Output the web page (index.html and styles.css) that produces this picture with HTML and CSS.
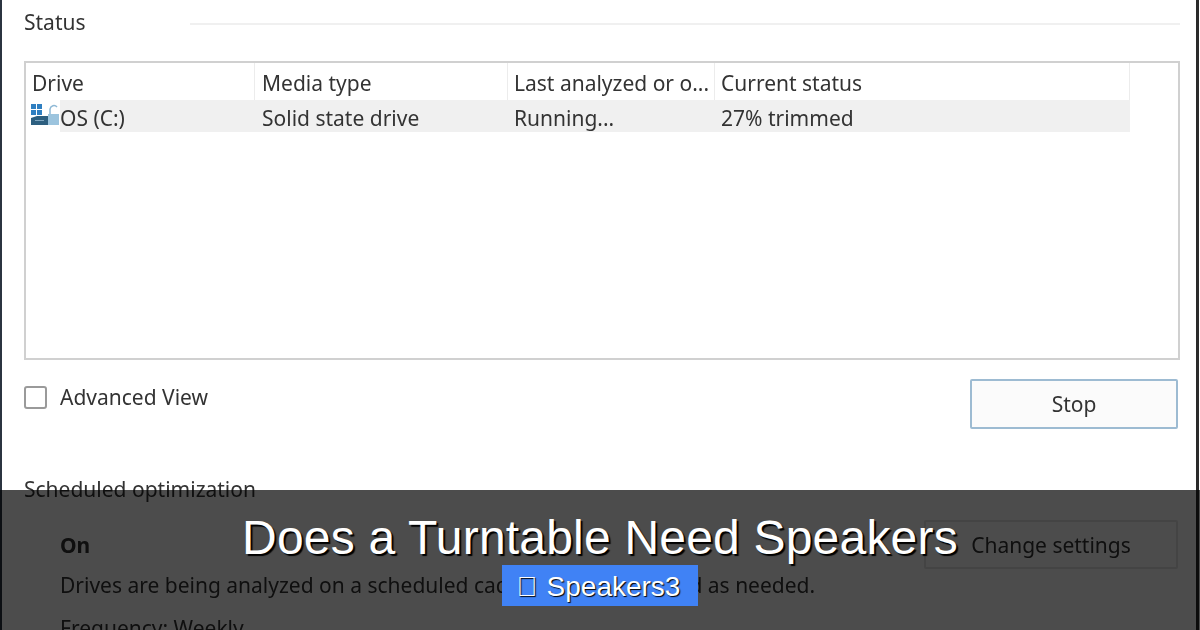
FILE: index.html
```html
<!DOCTYPE html>
<html lang="en">
<head>
    <meta charset="UTF-8">
    <meta name="viewport" content="width=device-width, initial-scale=1.0">
    <title>Does a Turntable Need Speakers</title>
    <link rel="stylesheet" href="styles.css">
</head>
<body>

<div class="window">
    <!-- Status group -->
    <div class="group-title">
        <span>Status</span>
        <div class="group-line"></div>
    </div>

    <div class="drive-list">
        <div class="drive-row drive-head">
            <div class="cell cell-drive">Drive</div>
            <div class="cell cell-media">Media type</div>
            <div class="cell cell-last">Last analyzed or o...</div>
            <div class="cell cell-status">Current status</div>
        </div>
        <div class="drive-row drive-selected">
            <div class="cell cell-drive">
                <svg class="drive-icon" width="30" height="26" viewBox="0 0 30 26">
                    <rect x="1" y="1" width="5" height="5" fill="#2f7fc1"/>
                    <rect x="7" y="1" width="5" height="5" fill="#2f7fc1"/>
                    <rect x="1" y="7" width="5" height="5" fill="#2f7fc1"/>
                    <rect x="7" y="7" width="5" height="5" fill="#2f7fc1"/>
                    <path d="M20 11V6a4 4 0 0 1 7 -2" fill="none" stroke="#8fb9d6" stroke-width="1.500"/>
                    <path d="M1 15 L7 13 H18 V22 H1 Z" fill="#2d5f80"/>
                    <rect x="18" y="11" width="11" height="11" fill="#9cc4de"/>
                    <rect x="5" y="17" width="9" height="1" fill="#7fa6c0"/>
                </svg>
                <span>OS (C:)</span>
            </div>
            <div class="cell cell-media">Solid state drive</div>
            <div class="cell cell-last">Running...</div>
            <div class="cell cell-status">27% trimmed</div>
        </div>
    </div>

    <div class="actions">
        <label class="check">
            <span class="check-box"></span>
            <span>Advanced View</span>
        </label>
        <div class="btn btn-stop">Stop</div>
    </div>

    <!-- Scheduled optimization -->
    <div class="schedule-title">Scheduled optimization</div>
    <div class="schedule">
        <div class="schedule-top">
            <b>On</b>
            <div class="btn btn-change">Change settings</div>
        </div>
        <p>Drives are being analyzed on a scheduled cadence and optimized as needed.</p>
        <p class="frequency">Frequency: Weekly</p>
    </div>
</div>

<!-- Title banner over the screenshot -->
<div class="banner">
    <h1>Does a Turntable Need Speakers</h1>
    <div class="tag"><span>&#xE000;</span><span>Speakers3</span></div>
</div>

</body>
</html>
```

FILE: styles.css
```css
html, body {
    margin: 0;
    padding: 0;
}

body {
    width: 1200px;
    height: 630px;
    overflow: hidden;
    position: relative;
    background: #fff;
    font-family: "Noto Sans", "Open Sans", sans-serif;
    color: #333;
}

.window {
    box-sizing: border-box;
    height: 630px;
    padding: 0 16px 0 22px;
    border-left: 2px solid #2b3440;
    border-right: 3px solid #2a2a2a;
    margin-right: 1px;
    font-size: 21px;
    filter: blur(0.6px);
}

.group-title {
    display: flex;
    align-items: center;
    height: 44px;
}

.group-line {
    flex: 1;
    height: 2px;
    margin-left: 104px;
    margin-top: 3px;
    background: #f0f0f0;
}

.drive-list {
    box-sizing: border-box;
    height: 299px;
    margin-top: 17px;
    padding-right: 48px;
    border: 2px solid #d0d0d0;
}

.drive-row {
    display: flex;
    align-items: center;
}

.drive-head {
    height: 37px;
}

.drive-selected {
    height: 32px;
    background: linear-gradient(to right, #fff 34px, #f0f0f0 34px);
}

.cell {
    box-sizing: border-box;
    padding: 2px 0 0 6px;
    height: 100%;
    display: flex;
    align-items: center;
    white-space: nowrap;
}

.drive-selected .cell {
    padding-top: 4px;
}

.drive-head .cell {
    border-right: 1px solid #ececec;
}

.cell-drive {
    width: 229px;
}

.cell-media {
    width: 253px;
    padding-left: 7px;
}

.cell-last {
    width: 207px;
    padding-left: 6px;
}

.cell-status {
    flex: 1;
}

.drive-icon {
    margin: -5px 0 0 -2px;
    flex-shrink: 0;
}

.actions {
    display: flex;
    align-items: flex-start;
    justify-content: space-between;
    margin-top: 19px;
    padding-right: 2px;
}

.check {
    display: flex;
    align-items: center;
    gap: 13px;
    margin-top: 4px;
}

.check-box {
    box-sizing: border-box;
    width: 23px;
    height: 23px;
    border: 2px solid #9a9a9a;
    border-radius: 3px;
}

.btn {
    box-sizing: border-box;
    display: flex;
    align-items: center;
    justify-content: center;
    border-radius: 2px;
}

.btn-stop {
    width: 208px;
    height: 50px;
    border: 2px solid #9dbbd2;
    background: #fbfbfb;
}

.schedule-title {
    margin-top: 46px;
    line-height: 28px;
}

.schedule {
    padding: 17px 2px 0 36px;
}

.schedule-top {
    display: flex;
    align-items: center;
    justify-content: space-between;
}

.btn-change {
    width: 254px;
    height: 49px;
    border: 2px solid #e4e4e4;
}

.schedule p {
    margin: 2px 0 0;
    line-height: 28px;
}

.schedule .frequency {
    margin-top: 15px;
}

.banner {
    position: absolute;
    left: 0;
    right: 0;
    bottom: 0;
    height: 140px;
    background: rgba(0, 0, 0, 0.7);
    display: flex;
    flex-direction: column;
    align-items: center;
    font-family: "Liberation Sans", Arial, sans-serif;
    color: #fff;
}

.banner h1 {
    margin: 20px 0 0;
    font-size: 48px;
    font-weight: 400;
    letter-spacing: 0.2px;
    line-height: 55px;
    text-shadow: 2px 2px 1px #000;
    white-space: nowrap;
}

.tag {
    box-sizing: border-box;
    height: 41px;
    padding: 3px 18px 0 15px;
    display: flex;
    align-items: center;
    gap: 9px;
    background: #4082f5;
    font-size: 28px;
    text-shadow: 1px 1px 1px #000;
    white-space: nowrap;
}
```
